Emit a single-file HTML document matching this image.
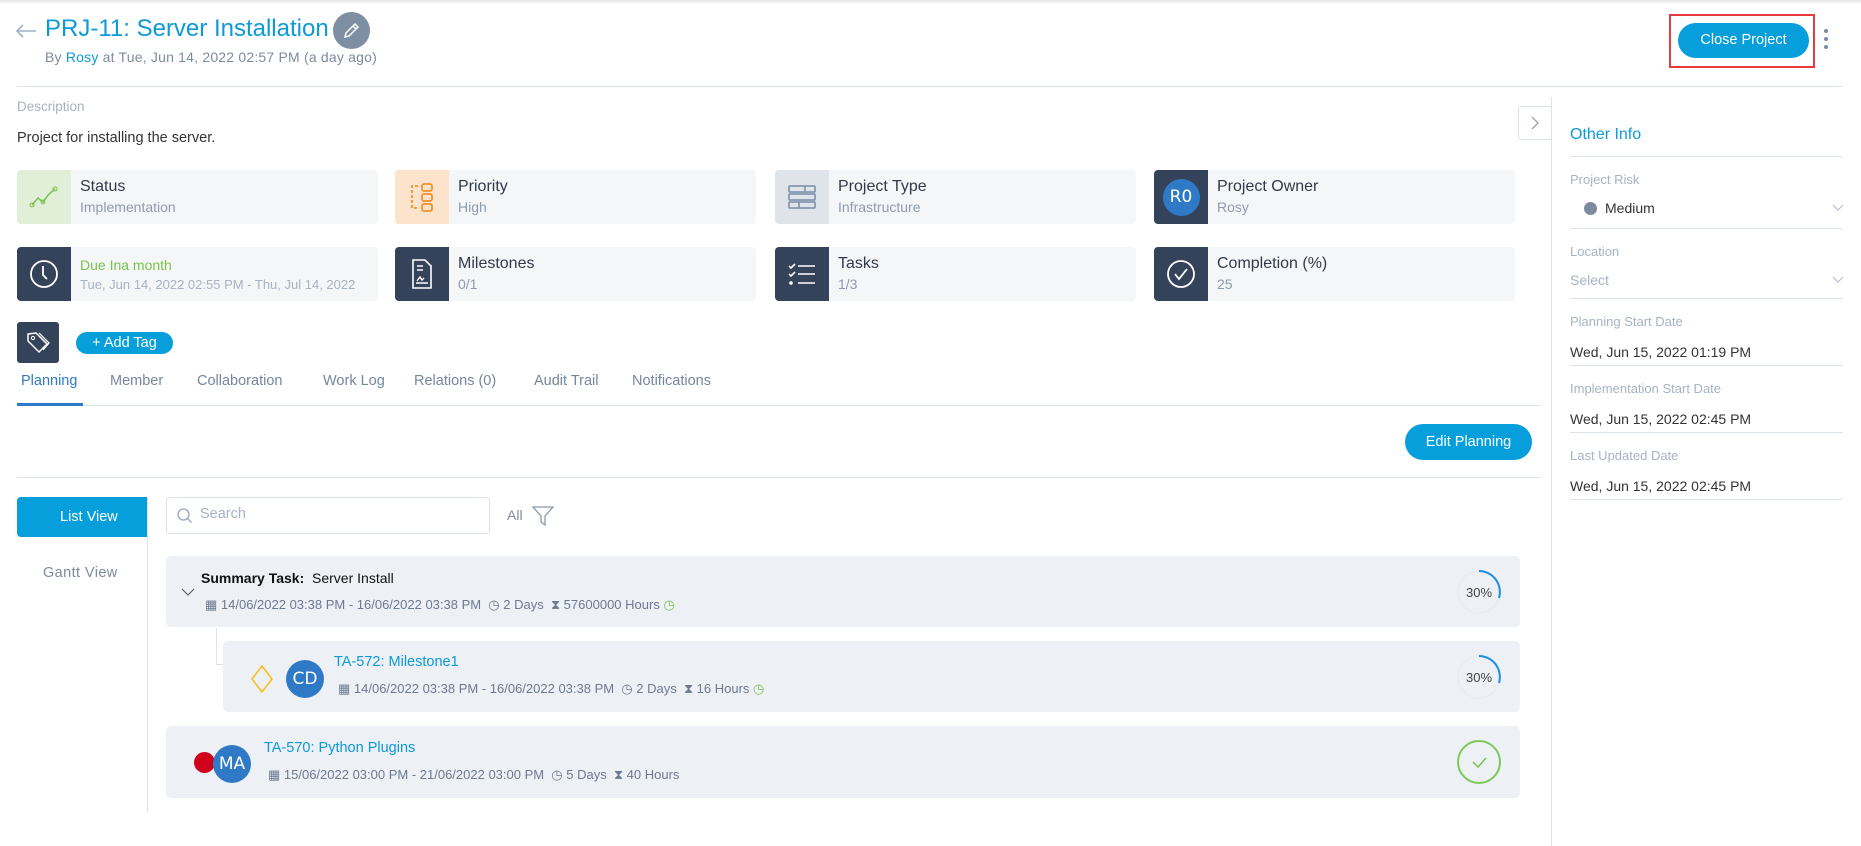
<!DOCTYPE html>
<html><head><meta charset="utf-8"><style>
*{box-sizing:border-box;margin:0;padding:0}
body{width:1861px;height:846px;background:#fff;font-family:"Liberation Sans",sans-serif;position:relative;overflow:hidden;color:#3a4556}
.a{position:absolute;white-space:nowrap}
.blue{color:#0c9ad8}
.card{position:absolute;height:54px;width:361px;background:#f5f6f8;border-radius:4px;overflow:hidden}
.card .ic{position:absolute;left:0;top:0;width:54px;height:54px;background:#34435a;display:flex;align-items:center;justify-content:center}
.card .t{position:absolute;left:63px;top:8px;font-size:16px;color:#2f3a4a}
.card .s{position:absolute;left:63px;top:29px;font-size:14px;color:#8c9bb0}
.hl{position:absolute;height:1px;background:#dde3ea}
.lbl{font-size:13px;color:#a6b3c4}
.val{font-size:14px;color:#333}
.task{position:absolute;background:#edf0f5;border-radius:5px}
.meta{font-size:13px;color:#6b7a90}
.tab{font-size:14.5px;color:#7486a0}
</style></head><body>
<div class="a" style="left:0;top:0;width:1861px;height:4px;background:linear-gradient(#e2e2e2,#fff)"></div>
<svg class="a" style="left:15px;top:24px" width="22" height="14"><path d="M21 7H2M8 1L2 7l6 6" stroke="#9fb0c6" stroke-width="1.6" fill="none"/></svg>
<div class="a blue" style="left:45px;top:15px;font-size:24px">PRJ-11: Server Installation</div>
<div class="a" style="left:333px;top:12px;width:37px;height:37px;border-radius:50%;background:#7f8fa3"></div>
<svg class="a" style="left:341px;top:20px" width="21" height="21"><path d="M4 17l1-4L14 4l3 3-9 9z M12 6l3 3" stroke="#fff" stroke-width="1.5" fill="none"/></svg>
<div class="a" style="left:45px;top:49px;font-size:14px;color:#7d8ba0;letter-spacing:0.2px">By <span class="blue">Rosy</span> at Tue, Jun 14, 2022 02:57 PM (a day ago)</div>
<div class="a" style="left:1669px;top:14px;width:146px;height:54px;border:2px solid #e8393f"></div>
<div class="a" style="left:1678px;top:23px;width:131px;height:35px;border-radius:18px;background:#069fdc;color:#fff;font-size:14.5px;text-align:center;line-height:35px">Close Project</div>
<div class="a" style="left:1824px;top:29px;width:4px;height:4px;border-radius:2px;background:#7d8ba0"></div>
<div class="a" style="left:1824px;top:37px;width:4px;height:4px;border-radius:2px;background:#7d8ba0"></div>
<div class="a" style="left:1824px;top:45px;width:4px;height:4px;border-radius:2px;background:#7d8ba0"></div>
<div class="hl" style="left:17px;top:86px;width:1826px"></div>

<div class="a lbl" style="left:17px;top:99px;font-size:13.5px">Description</div>
<div class="a" style="left:17px;top:130px;font-size:14.5px;color:#333">Project for installing the server.</div>

<div class="card" style="left:17px;top:170px"><div class="ic" style="background:#e1efd9"><svg width="30" height="24"><path d="M3 20l6-7 5 4 6-8 6-5" stroke="#7cc24c" stroke-width="1.5" fill="none"/><circle cx="3" cy="20" r="2" fill="none" stroke="#7cc24c"/><circle cx="14" cy="17" r="2" fill="none" stroke="#7cc24c"/><circle cx="26" cy="4" r="2" fill="none" stroke="#7cc24c"/></svg></div><div class="t">Status</div><div class="s">Implementation</div></div>
<div class="card" style="left:395px;top:170px"><div class="ic" style="background:#fbe3cc"><svg width="30" height="32"><g stroke="#f5902c" stroke-width="1.8" fill="none"><rect x="15" y="3" width="10" height="7" rx="2"/><rect x="15" y="13" width="10" height="7" rx="2"/><rect x="15" y="23" width="10" height="7" rx="2"/><path d="M11 5H5v22h7" stroke-dasharray="3 2"/></g></svg></div><div class="t">Priority</div><div class="s">High</div></div>
<div class="card" style="left:775px;top:170px"><div class="ic" style="background:#dfe3ea"><svg width="30" height="26"><g stroke="#8898ae" stroke-width="1.8" fill="none"><rect x="2" y="2" width="26" height="6" rx="1"/><rect x="2" y="10" width="26" height="6" rx="1"/><rect x="2" y="18" width="26" height="6" rx="1"/><path d="M18 2v6M12 18v6"/></g></svg></div><div class="t">Project Type</div><div class="s">Infrastructure</div></div>
<div class="card" style="left:1154px;top:170px"><div class="ic"><div style="width:37px;height:37px;border-radius:50%;background:#2f7ac6;color:#fff;font-size:17px;text-align:center;line-height:37px;font-family:'DejaVu Sans',sans-serif">R0</div></div><div class="t">Project Owner</div><div class="s">Rosy</div></div>

<div class="card" style="left:17px;top:247px"><div class="ic"><svg width="32" height="32"><circle cx="16" cy="16" r="13" stroke="#fff" stroke-width="1.8" fill="none"/><path d="M15 8v9l4 4" stroke="#fff" stroke-width="1.8" fill="none"/></svg></div><div class="t" style="color:#7cc24c;font-size:14px;top:10px">Due Ina month</div><div class="s" style="color:#a7b3c4;font-size:13px;top:30px">Tue, Jun 14, 2022 02:55 PM - Thu, Jul 14, 2022</div></div>
<div class="card" style="left:395px;top:247px"><div class="ic"><svg width="24" height="32"><path d="M3 2h12l6 6v22H3z" stroke="#fff" stroke-width="1.6" fill="none"/><path d="M7 8h6M7 12h6M6 25h12M7 23l3-4 2 3 2-2" stroke="#fff" stroke-width="1.4" fill="none"/></svg></div><div class="t">Milestones</div><div class="s">0/1</div></div>
<div class="card" style="left:775px;top:247px"><div class="ic"><svg width="30" height="26"><g stroke="#fff" stroke-width="1.6" fill="none"><path d="M2 5l2 2 4-4M2 13l2 2 4-4M11 5h17M11 13h17M11 22h17"/><circle cx="4" cy="22" r="1" fill="#fff"/></g></svg></div><div class="t">Tasks</div><div class="s">1/3</div></div>
<div class="card" style="left:1154px;top:247px"><div class="ic"><svg width="32" height="32"><circle cx="16" cy="16" r="13" stroke="#fff" stroke-width="1.8" fill="none"/><path d="M10 16l4 5 8-10" stroke="#fff" stroke-width="1.8" fill="none"/></svg></div><div class="t">Completion (%)</div><div class="s">25</div></div>

<div class="a" style="left:17px;top:322px;width:42px;height:41px;background:#34435a;border-radius:3px"></div>
<svg class="a" style="left:25px;top:330px" width="26" height="26"><path d="M3 4l8-1 11 11-8 8L3 11z" stroke="#fff" stroke-width="1.5" fill="none"/><path d="M14 3l10 10-6 7" stroke="#fff" stroke-width="1.3" fill="none"/><circle cx="8" cy="8" r="1.6" stroke="#fff" fill="none"/></svg>
<div class="a" style="left:76px;top:332px;width:97px;height:22px;border-radius:11px;background:#069fdc;color:#fff;font-size:14.5px;text-align:center;line-height:22px">+ Add Tag</div>

<div class="a tab" style="left:21px;top:373px;color:#2f7ac6">Planning</div>
<div class="a tab" style="left:110px;top:373px">Member</div>
<div class="a tab" style="left:197px;top:373px">Collaboration</div>
<div class="a tab" style="left:323px;top:373px">Work Log</div>
<div class="a tab" style="left:414px;top:373px">Relations (0)</div>
<div class="a tab" style="left:534px;top:373px">Audit Trail</div>
<div class="a tab" style="left:632px;top:373px">Notifications</div>
<div class="hl" style="left:17px;top:405px;width:1524px"></div>
<div class="a" style="left:17px;top:403px;width:66px;height:3px;background:#2f7ac6"></div>

<div class="a" style="left:1405px;top:424px;width:127px;height:36px;border-radius:18px;background:#069fdc;color:#fff;font-size:14.5px;text-align:center;line-height:36px">Edit Planning</div>
<div class="hl" style="left:17px;top:477px;width:1524px"></div>

<div class="a" style="left:1518px;top:106px;width:34px;height:34px;border:1px solid #dde3ea;border-right:none;border-radius:3px 0 0 3px;background:#fff"></div>
<svg class="a" style="left:1529px;top:115px" width="12" height="16"><path d="M3 2l6 6-6 6" stroke="#8a98ad" stroke-width="1.2" fill="none"/></svg>
<div class="a" style="left:1551px;top:97px;width:1px;height:749px;background:#dde3ea"></div>

<div class="a blue" style="left:1570px;top:126px;font-size:16px">Other Info</div>
<div class="hl" style="left:1570px;top:156px;width:273px"></div>
<div class="a lbl" style="left:1570px;top:172px">Project Risk</div>
<div class="a" style="left:1584px;top:202px;width:13px;height:13px;border-radius:50%;background:#7d8ba0"></div>
<div class="a val" style="left:1605px;top:200px">Medium</div>
<svg class="a" style="left:1832px;top:203px" width="12" height="10"><path d="M1 2l5 5 5-5" stroke="#b0bccb" fill="none"/></svg>
<div class="hl" style="left:1570px;top:228px;width:273px"></div>
<div class="a lbl" style="left:1570px;top:244px">Location</div>
<div class="a val" style="left:1570px;top:272px;color:#a6b3c4">Select</div>
<svg class="a" style="left:1832px;top:275px" width="12" height="10"><path d="M1 2l5 5 5-5" stroke="#b0bccb" fill="none"/></svg>
<div class="hl" style="left:1570px;top:298px;width:273px"></div>
<div class="a lbl" style="left:1570px;top:314px">Planning Start Date</div>
<div class="a val" style="left:1570px;top:344px">Wed, Jun 15, 2022 01:19 PM</div>
<div class="hl" style="left:1570px;top:365px;width:273px"></div>
<div class="a lbl" style="left:1570px;top:381px">Implementation Start Date</div>
<div class="a val" style="left:1570px;top:411px">Wed, Jun 15, 2022 02:45 PM</div>
<div class="hl" style="left:1570px;top:432px;width:273px"></div>
<div class="a lbl" style="left:1570px;top:448px">Last Updated Date</div>
<div class="a val" style="left:1570px;top:478px">Wed, Jun 15, 2022 02:45 PM</div>
<div class="hl" style="left:1570px;top:499px;width:273px"></div>

<div class="a" style="left:17px;top:497px;width:131px;height:40px;background:#069fdc;border-radius:4px 0 0 4px;color:#fff;font-size:14.5px;line-height:40px;padding-left:43px">List View</div>
<div class="a" style="left:147px;top:497px;width:1px;height:315px;background:#dde3ea"></div>
<div class="a" style="left:43px;top:565px;font-size:14.5px;color:#7d8ba0;letter-spacing:0.4px">Gantt View</div>
<div class="a" style="left:166px;top:497px;width:324px;height:37px;border:1px solid #dde3ea;border-radius:3px"></div>
<svg class="a" style="left:176px;top:507px" width="18" height="18"><circle cx="7.5" cy="7.5" r="5.5" stroke="#9aa8bb" stroke-width="1.3" fill="none"/><path d="M11.5 11.5l4 4" stroke="#9aa8bb" stroke-width="1.3"/></svg>
<div class="a" style="left:200px;top:506px;font-size:14.5px;color:#a6b3c4">Search</div>
<div class="a" style="left:507px;top:507px;font-size:14px;color:#7d8ba0">All</div>
<svg class="a" style="left:531px;top:504px" width="24" height="24"><path d="M2 3h20l-8 9v9l-4-3v-6z" stroke="#8a98ad" stroke-width="1.3" fill="none"/></svg>

<div class="task" style="left:166px;top:556px;width:1354px;height:71px"></div>
<svg class="a" style="left:181px;top:587px" width="14" height="10"><path d="M1 2l6 6 6-6" stroke="#556" fill="none"/></svg>
<div class="a" style="left:201px;top:570px;font-size:14px;color:#111"><b>Summary Task:</b>&nbsp; Server Install</div>
<div class="a meta" style="left:205px;top:597px">▦ 14/06/2022 03:38 PM - 16/06/2022 03:38 PM &nbsp;◷ 2 Days &nbsp;⧗ 57600000 Hours <span style="color:#7cc24c">◷</span></div>

<div class="a" style="left:216px;top:628px;width:8px;height:37px;border-left:1px solid #dde3ea;border-bottom:1px solid #dde3ea"></div>
<div class="task" style="left:223px;top:641px;width:1297px;height:71px"></div>
<svg class="a" style="left:250px;top:664px" width="24" height="30"><path d="M12 2l10 13-10 13L2 15z" stroke="#f5c01a" stroke-width="1.6" fill="none"/></svg>
<div class="a" style="left:286px;top:660px;width:38px;height:38px;border-radius:50%;background:#2f7ac6;color:#fff;font-size:17px;text-align:center;line-height:38px;font-family:'DejaVu Sans',sans-serif">CD</div>
<div class="a blue" style="left:334px;top:654px;font-size:14.5px">TA-572: Milestone1</div>
<div class="a meta" style="left:338px;top:681px">▦ 14/06/2022 03:38 PM - 16/06/2022 03:38 PM &nbsp;◷ 2 Days &nbsp;⧗ 16 Hours <span style="color:#7cc24c">◷</span></div>

<div class="task" style="left:166px;top:726px;width:1354px;height:72px"></div>
<div class="a" style="left:194px;top:752px;width:21px;height:21px;border-radius:50%;background:#d0021b"></div>
<div class="a" style="left:213px;top:745px;width:38px;height:38px;border-radius:50%;background:#2f7ac6;color:#fff;font-size:17px;text-align:center;line-height:38px;font-family:'DejaVu Sans',sans-serif">MA</div>
<div class="a blue" style="left:264px;top:740px;font-size:14.5px">TA-570: Python Plugins</div>
<div class="a meta" style="left:268px;top:767px">▦ 15/06/2022 03:00 PM - 21/06/2022 03:00 PM &nbsp;◷ 5 Days &nbsp;⧗ 40 Hours</div>

<svg class="a" style="left:1456px;top:569px" width="46" height="46"><circle cx="23" cy="23" r="21" stroke="#e8ecf1" stroke-width="1.5" fill="none"/><path d="M23 2A21 21 0 0 1 43 29" stroke="#1a8fe3" stroke-width="2" fill="none"/><text x="23" y="28" font-size="13" fill="#444" text-anchor="middle" font-family="Liberation Sans">30%</text></svg>
<svg class="a" style="left:1456px;top:654px" width="46" height="46"><circle cx="23" cy="23" r="21" stroke="#e8ecf1" stroke-width="1.5" fill="none"/><path d="M23 2A21 21 0 0 1 43 29" stroke="#1a8fe3" stroke-width="2" fill="none"/><text x="23" y="28" font-size="13" fill="#444" text-anchor="middle" font-family="Liberation Sans">30%</text></svg>
<svg class="a" style="left:1456px;top:739px" width="46" height="46"><circle cx="23" cy="23" r="21" stroke="#7cc85a" stroke-width="2" fill="none"/><path d="M17 23l5 5 8-9" stroke="#7cc24c" stroke-width="1.5" fill="none"/></svg>
</body></html>
